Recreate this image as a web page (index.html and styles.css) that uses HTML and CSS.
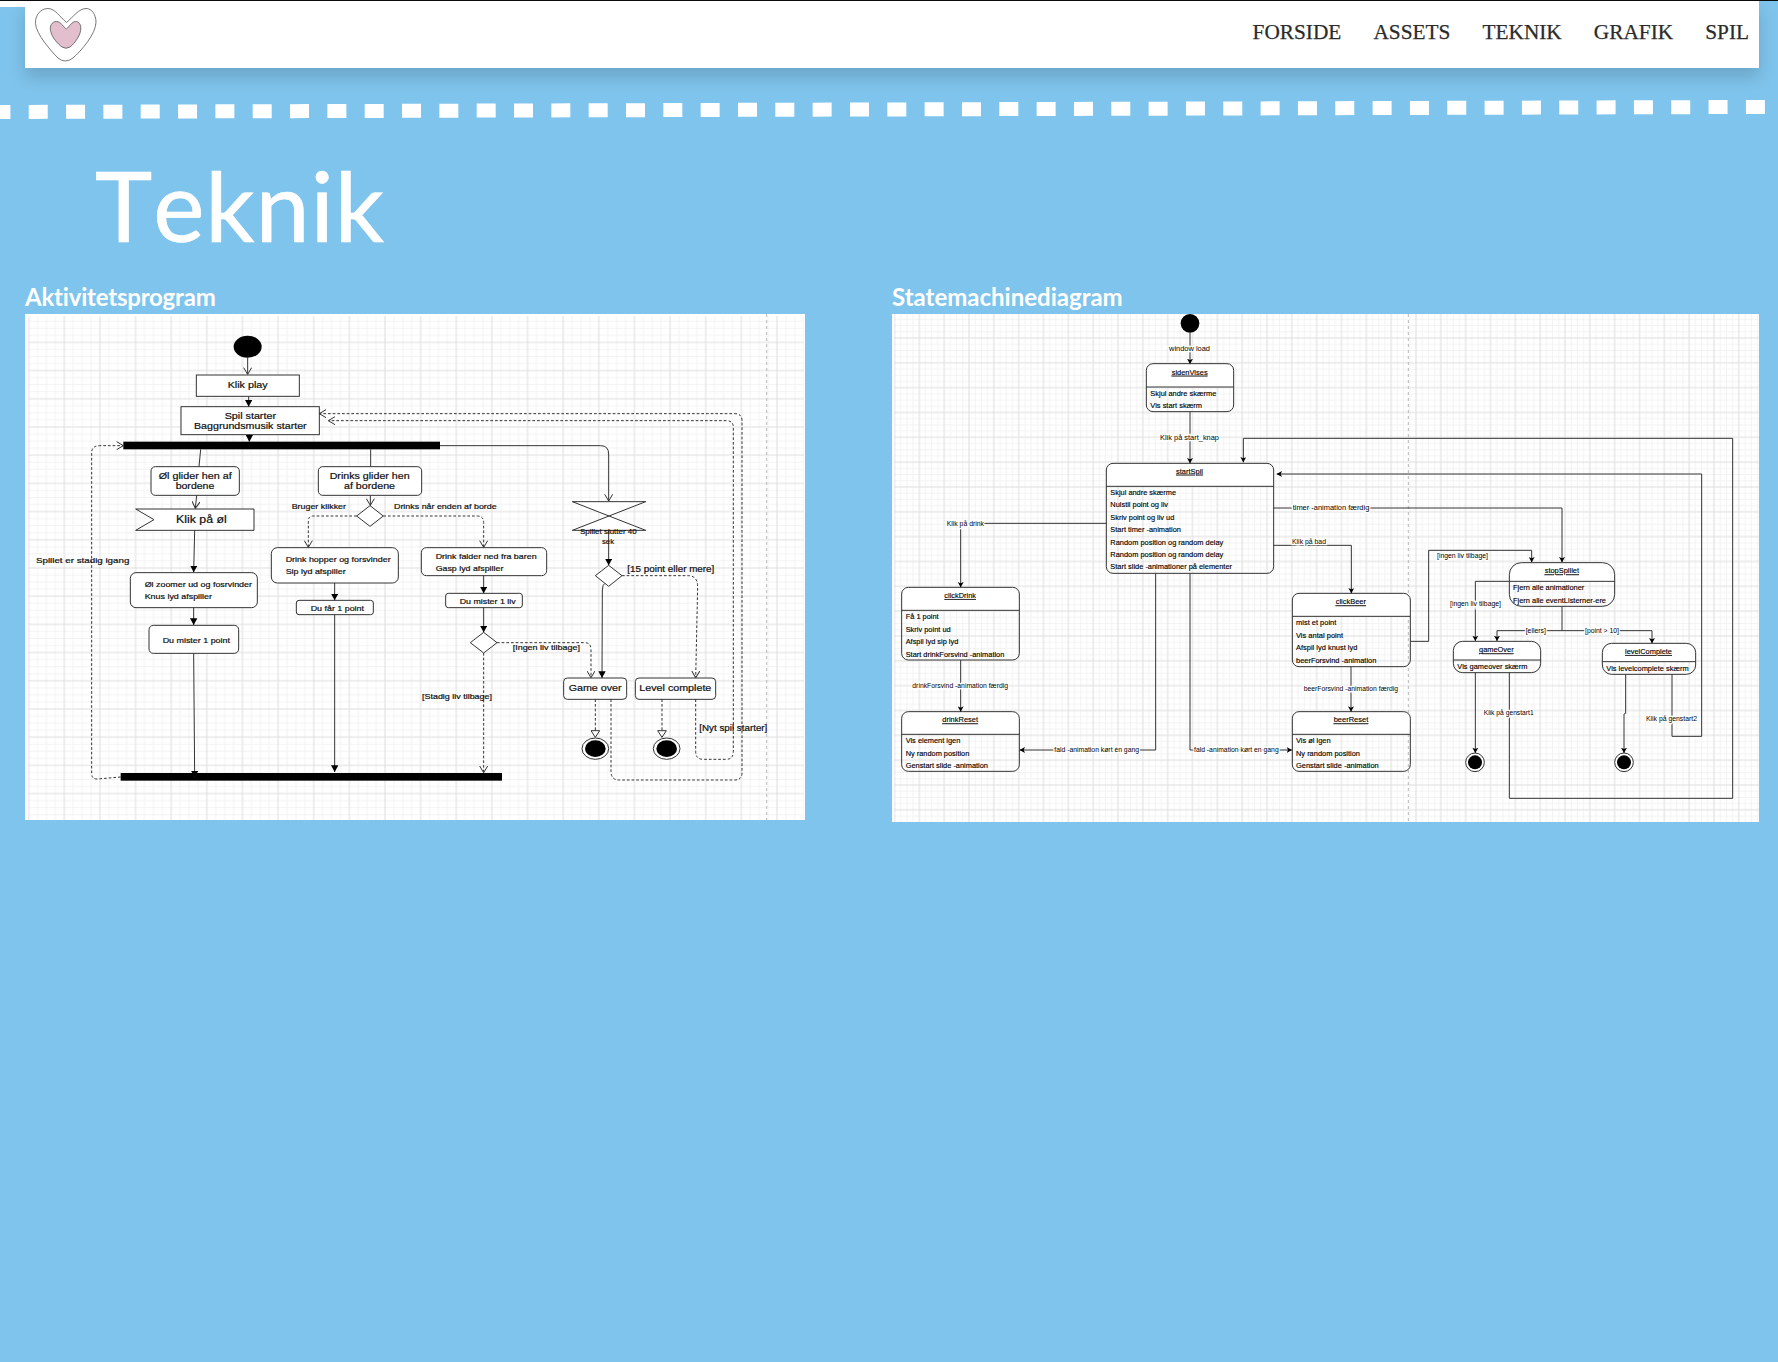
FILE: index.html
```html
<!DOCTYPE html>
<html lang="da">
<head>
<meta charset="utf-8">
<title>Teknik</title>
<link rel="stylesheet" href="styles.css">
</head>
<body>
<header class="topbar">
  <a class="logo" href="#"><svg viewBox="0 0 62 54" width="62" height="54"><path class="heart-outer" d="M31.5 14.500C25 9 20 .5 13 .5 5 .5 0 8 .5 15.500 1 26 16 43 23 50Q30 56 38 50C46 43 61 26 61 14 61 7 57 .5 51 .5 44 .5 38 9 31.500 14.500Z"/><path class="heart-inner" d="M31.500 21C28 19 26 13.500 21.500 13.500 17 13.500 14.500 18 15.500 22.500 17 30 23 36 27 39Q31 41.500 35 39C40 35 46 27 45.800 20 45.500 15 43 13.500 40.500 13.500 37 13.500 34 19 31.500 21Z"/></svg></a>
  <nav class="menu"><a href="#">FORSIDE</a><a href="#">ASSETS</a><a href="#">TEKNIK</a><a href="#">GRAFIK</a><a href="#">SPIL</a></nav>
</header>
<svg class="stitch" viewBox="0 0 1778 24" width="1778" height="24"><path d="M-8.600 14L1778 8.900" stroke-dasharray="19 18.330"/></svg>
<h1>Teknik</h1>
<main class="diagrams">
<section>
<h2 class="h-a">Aktivitetsprogram</h2>
<svg class="diagram activity" viewBox="15 12 2340 1518">
<defs>
  <pattern id="gridA" x="26" y="12.500" width="106.900" height="84.600" patternUnits="userSpaceOnUse"><path class="minor" d="M26.700 0V85M53.400 0V85M80.200 0V85M0 21.100H107M0 42.300H107M0 63.400H107"/><path class="major" d="M0 0V85M106.900 0V85M0 0H107M0 84.600H107"/></pattern>
  <marker id="solid" viewBox="0 0 24 18" refX="24" refY="9" markerWidth="20" markerHeight="22" markerUnits="userSpaceOnUse" orient="auto" preserveAspectRatio="none"><path d="M0 0L24 9L0 18Z"/></marker>
  <marker id="open" viewBox="0 0 24 26" refX="22" refY="13" markerWidth="24" markerHeight="26" markerUnits="userSpaceOnUse" orient="auto"><path class="tip" d="M2 1L22 13L2 25"/></marker>
  <marker id="hollow" viewBox="0 0 24 28" refX="2" refY="14" markerWidth="24" markerHeight="28" markerUnits="userSpaceOnUse" orient="auto"><path class="tip white" d="M2 1L22 14L2 27Z"/></marker>
</defs>
<rect class="paper" x="15" y="12" width="2340" height="1518"/>
<rect x="24" y="18" width="2328" height="1512" fill="url(#gridA)"/>
<path class="pagebreak" d="M2240 12V1530"/>
<g class="node">
  <rect x="529" y="195" width="309" height="64"/><rect x="483" y="290" width="415" height="84"/>
  <rect x="393" y="470" width="265" height="86" rx="13"/><path d="M347 597H702V661H347L402 629Z"/>
  <rect x="331" y="788" width="381" height="105" rx="17"/><rect x="387" y="946" width="269" height="84" rx="13"/>
  <rect x="895" y="470" width="310" height="86" rx="13"/><path d="M1010 618L1050 587L1090 618L1050 649Z"/>
  <rect x="754" y="713" width="381" height="106" rx="18"/><rect x="829" y="871" width="231" height="43" rx="8"/>
  <rect x="1204" y="713" width="376" height="84" rx="15"/><rect x="1277" y="850" width="230" height="43" rx="8"/>
  <path d="M1351 998L1391 967L1431 998L1391 1029Z"/><path d="M1657 575H1877L1657 661H1877Z"/>
  <path d="M1726 797L1766 766L1806 797L1766 829Z"/>
  <rect x="1631" y="1104" width="189" height="64" rx="11"/><rect x="1846" y="1104" width="241" height="64" rx="11"/>
  <ellipse cx="1726" cy="1316" rx="40" ry="32"/><ellipse cx="1940" cy="1316" rx="40" ry="32"/>
</g>
<g class="ink">
  <ellipse cx="683" cy="110" rx="42" ry="33"/><ellipse cx="1726" cy="1316" rx="31" ry="25"/><ellipse cx="1940" cy="1316" rx="31" ry="25"/>
  <rect x="310" y="395" width="950" height="23"/><rect x="302" y="1389" width="1144" height="23"/>
</g>
<g class="line">
  <path d="M683 143V193" marker-end="url(#open)"/><path d="M530 556L526 595" marker-end="url(#open)"/><path d="M1051 556V586" marker-end="url(#open)"/><path d="M1260 407H1742Q1766 407 1766 432V573" marker-end="url(#open)"/>
  <path d="M542 418L537 470M1052 418V470"/>
  <path d="M686 259V290" marker-end="url(#solid)"/><path d="M688 374V395" marker-end="url(#solid)"/><path d="M524 661L521 787" marker-end="url(#solid)"/><path d="M521 893V945" marker-end="url(#solid)"/><path d="M521 1030L524 1402" marker-end="url(#solid)"/>
  <path d="M944 819V871" marker-end="url(#solid)"/><path d="M944 914V1386" marker-end="url(#solid)"/><path d="M1391 797V850" marker-end="url(#solid)"/><path d="M1391 893V967" marker-end="url(#solid)"/><path d="M1766 661V766" marker-end="url(#solid)"/><path d="M1755 820Q1748 822 1747 840L1746 1104" marker-end="url(#solid)"/>
</g>
<g class="line dashed">
  <path d="M302 1401L232 1407Q215 1408 215 1390V425Q217 407 240 407H310" marker-end="url(#open)"/>
  <path d="M1010 618H880Q865 618 865 633V712" marker-end="url(#open)"/><path d="M1090 618H1372Q1391 618 1391 638V712" marker-end="url(#open)"/>
  <path d="M1431 998H1693Q1713 998 1713 1018V1103" marker-end="url(#open)"/><path d="M1391 1029V1388" marker-end="url(#open)"/>
  <path d="M1806 797H2005Q2033 798 2033 830L2027 1103" marker-end="url(#open)"/>
  <path d="M1726 1168V1262" marker-end="url(#hollow)"/><path d="M1926 1168V1262" marker-end="url(#hollow)"/>
  <path d="M1773 1168V1385Q1773 1410 1798 1410H2144Q2166 1410 2166 1388V332Q2166 311 2144 311H898" marker-end="url(#open)"/>
  <path d="M2027 1168V1325Q2027 1348 2050 1348H2118Q2140 1348 2140 1325V352Q2140 332 2118 332H925" marker-end="url(#open)"/>
</g>
<g class="t-mid">
  <text x="623" y="235" textLength="120" lengthAdjust="spacingAndGlyphs">Klik play</text>
  <text x="614" y="326" textLength="154" lengthAdjust="spacingAndGlyphs">Spil starter</text>
  <text x="522" y="356" textLength="338" lengthAdjust="spacingAndGlyphs">Baggrundsmusik starter</text>
  <text x="416" y="507" textLength="219" lengthAdjust="spacingAndGlyphs">Øl glider hen af</text>
  <text x="467" y="537" textLength="116" lengthAdjust="spacingAndGlyphs">bordene</text>
  <text x="929" y="507" textLength="240" lengthAdjust="spacingAndGlyphs">Drinks glider hen</text>
  <text x="972" y="537" textLength="153" lengthAdjust="spacingAndGlyphs">af bordene</text>
  <text x="1646" y="1142" textLength="159" lengthAdjust="spacingAndGlyphs">Game over</text>
  <text x="1858" y="1142" textLength="216" lengthAdjust="spacingAndGlyphs">Level complete</text>
</g>
<g class="t-note">
  <text x="1822" y="787" textLength="261" lengthAdjust="spacingAndGlyphs">[15 point eller mere]</text>
  <text x="2038" y="1264" textLength="204" lengthAdjust="spacingAndGlyphs">[Nyt spil starter]</text>
</g>
<g class="t-big"><text x="468" y="638" textLength="152" lengthAdjust="spacingAndGlyphs">Klik på øl</text></g>
<g class="t-small">
  <text x="815" y="596" textLength="163" lengthAdjust="spacingAndGlyphs">Bruger klikker</text>
  <text x="1122" y="597" textLength="308" lengthAdjust="spacingAndGlyphs">Drinks når enden af borde</text>
  <text x="48" y="758" textLength="280" lengthAdjust="spacingAndGlyphs">Spillet er stadig igang</text>
  <text x="797" y="757" textLength="315" lengthAdjust="spacingAndGlyphs">Drink hopper og forsvinder</text>
  <text x="797" y="793" textLength="180" lengthAdjust="spacingAndGlyphs">Sip lyd afspiller</text>
  <text x="374" y="832" textLength="322" lengthAdjust="spacingAndGlyphs">Øl zoomer ud og fosrvinder</text>
  <text x="374" y="868" textLength="202" lengthAdjust="spacingAndGlyphs">Knus lyd afspiller</text>
  <text x="872" y="903" textLength="160" lengthAdjust="spacingAndGlyphs">Du får 1 point</text>
  <text x="428" y="998" textLength="202" lengthAdjust="spacingAndGlyphs">Du mister 1 point</text>
  <text x="1680" y="671" textLength="170" lengthAdjust="spacingAndGlyphs">Spillet slutter 40</text>
  <text x="1746" y="702" textLength="36" lengthAdjust="spacingAndGlyphs">sek</text>
  <text x="1247" y="747" textLength="303" lengthAdjust="spacingAndGlyphs">Drink falder ned fra baren</text>
  <text x="1247" y="784" textLength="203" lengthAdjust="spacingAndGlyphs">Gasp lyd afspiller</text>
  <text x="1319" y="882" textLength="168" lengthAdjust="spacingAndGlyphs">Du mister 1 liv</text>
  <text x="1478" y="1019" textLength="202" lengthAdjust="spacingAndGlyphs">[Ingen liv tilbage]</text>
  <text x="1206" y="1167" textLength="210" lengthAdjust="spacingAndGlyphs">[Stadig liv tilbage]</text>
</g>
</svg>
</section>
<section>
<h2 class="h-s">Statemachinediagram</h2>
<svg class="diagram state" viewBox="21 132 2601 1524">
<defs>
  <pattern id="gridS" x="28.500" y="129.400" width="74.500" height="74.500" patternUnits="userSpaceOnUse"><path class="minor" d="M18.600 0V75M37.200 0V75M55.900 0V75M0 18.600H75M0 37.200H75M0 55.900H75"/><path class="major" d="M0 0V75M74.500 0V75M0 0H75M0 74.500H75"/></pattern>
  <marker id="arrow" viewBox="0 0 16 18" refX="16" refY="9" markerWidth="16" markerHeight="18" markerUnits="userSpaceOnUse" orient="auto"><path d="M0 0L16 9L0 18L4 9Z"/></marker>
</defs>
<rect class="paper" x="21" y="132" width="2601" height="1524"/>
<rect x="27" y="132" width="2595" height="1524" fill="url(#gridS)"/>
<path class="pagebreak" d="M1570 132V1656"/>
<g class="white">
  <path d="M784 351V301Q784 281 804 281H1026Q1046 281 1046 301V351ZM664 649V600Q664 580 684 580H1146Q1166 580 1166 600V649ZM50 1021V972Q50 952 70 952H383Q403 952 403 972V1021ZM50 1393V1345Q50 1325 70 1325H383Q403 1325 403 1345V1393ZM1222 1039V990Q1222 970 1242 970H1556Q1576 970 1576 990V1039ZM1222 1393V1345Q1222 1325 1242 1325H1556Q1576 1325 1576 1345V1393Z"/>
  <path d="M1873 934V914Q1877 882 1909 878H2153Q2185 882 2189 914V934ZM1705 1170V1142Q1709 1116 1733 1114H1939Q1963 1116 1967 1142V1170ZM2152 1175V1148Q2156 1122 2180 1120H2404Q2428 1122 2432 1148V1175Z"/>
  <circle cx="1770" cy="1477" r="28"/><circle cx="2217" cy="1477" r="28"/>
</g>
<g class="line">
  <rect x="784" y="281" width="262" height="144" rx="20"/><rect x="664" y="580" width="502" height="330" rx="20"/>
  <rect x="50" y="952" width="353" height="218" rx="20"/><rect x="50" y="1325" width="353" height="179" rx="20"/>
  <rect x="1222" y="970" width="354" height="220" rx="20"/><rect x="1222" y="1325" width="354" height="179" rx="20"/>
  <rect x="1873" y="878" width="316" height="131" rx="36"/><rect x="1705" y="1114" width="262" height="94" rx="28"/><rect x="2152" y="1120" width="280" height="93" rx="28"/>
  <circle cx="1770" cy="1477" r="28"/><circle cx="2217" cy="1477" r="28"/>
  <path d="M784 351H1046M664 649H1166M50 1021H403M50 1393H403M1222 1039H1576M1222 1393H1576M1873 934H2189M1705 1170H1967M2152 1175H2432M2031 1009V1082"/>
  <path d="M915 188V282" marker-end="url(#arrow)"/><path d="M915 425V580" marker-end="url(#arrow)"/>
  <path d="M664 760H227V952" marker-end="url(#arrow)"/><path d="M227 1170V1325" marker-end="url(#arrow)"/>
  <path d="M812 910V1440H404" marker-end="url(#arrow)"/><path d="M915 910V1440H1221" marker-end="url(#arrow)"/>
  <path d="M1398 1190V1325" marker-end="url(#arrow)"/><path d="M1166 714H2031V877" marker-end="url(#arrow)"/>
  <path d="M1166 826H1399V970" marker-end="url(#arrow)"/><path d="M1576 1114H1631V841H1940V877" marker-end="url(#arrow)"/>
  <path d="M1873 934H1771V1113" marker-end="url(#arrow)"/><path d="M2031 1082H1836V1113" marker-end="url(#arrow)"/><path d="M2031 1082H2301V1120" marker-end="url(#arrow)"/>
  <path d="M1771 1208V1449" marker-end="url(#arrow)"/><path d="M2222 1213V1330L2217 1332V1449" marker-end="url(#arrow)"/>
  <path d="M1873 1208V1585H2543V505H1075V577" marker-end="url(#arrow)"/><path d="M2361 1213V1399H2450V612H1175" marker-end="url(#arrow)"/>
</g>
<g class="ink"><circle cx="915" cy="160" r="28"/><circle cx="1770" cy="1477" r="21"/><circle cx="2217" cy="1477" r="21"/></g>
<g class="label">
  <text x="852" y="242" textLength="123" lengthAdjust="spacingAndGlyphs">window load</text>
  <text x="825" y="510" textLength="177" lengthAdjust="spacingAndGlyphs">Klik på start_knap</text>
  <text x="185" y="767" textLength="112" lengthAdjust="spacingAndGlyphs">Klik på drink</text>
  <text x="82" y="1254" textLength="287" lengthAdjust="spacingAndGlyphs">drinkForsvind -animation færdig</text>
  <text x="508" y="1446" textLength="254" lengthAdjust="spacingAndGlyphs">fald -animation kørt én gang</text>
  <text x="927" y="1446" textLength="254" lengthAdjust="spacingAndGlyphs">fald -animation kørt en gang</text>
  <text x="1256" y="1263" textLength="283" lengthAdjust="spacingAndGlyphs">beerForsvind -animation færdig</text>
  <text x="1223" y="720" textLength="230" lengthAdjust="spacingAndGlyphs">timer -animation færdig</text>
  <text x="1221" y="823" textLength="102" lengthAdjust="spacingAndGlyphs">Klik på bad</text>
  <text x="1656" y="863" textLength="153" lengthAdjust="spacingAndGlyphs">[ingen liv tilbage]</text>
  <text x="1695" y="1007" textLength="153" lengthAdjust="spacingAndGlyphs">[ingen liv tilbage]</text>
  <text x="1922" y="1088" textLength="61" lengthAdjust="spacingAndGlyphs">[ellers]</text>
  <text x="2100" y="1088" textLength="102" lengthAdjust="spacingAndGlyphs">[point &gt; 10]</text>
  <text x="1796" y="1336" textLength="150" lengthAdjust="spacingAndGlyphs">Klik på genstart1</text>
  <text x="2283" y="1353" textLength="153" lengthAdjust="spacingAndGlyphs">Klik på genstart2</text>
</g>
<g class="name">
  <text x="860" y="314" textLength="108" lengthAdjust="spacingAndGlyphs">sidenVises</text>
  <text x="873" y="611" textLength="81" lengthAdjust="spacingAndGlyphs">startSpil</text>
  <text x="178" y="984" textLength="95" lengthAdjust="spacingAndGlyphs">clickDrink</text>
  <text x="172" y="1357" textLength="107" lengthAdjust="spacingAndGlyphs">drinkReset</text>
  <text x="1352" y="1003" textLength="91" lengthAdjust="spacingAndGlyphs">clickBeer</text>
  <text x="1346" y="1357" textLength="104" lengthAdjust="spacingAndGlyphs">beerReset</text>
  <text x="1979" y="910" textLength="103" lengthAdjust="spacingAndGlyphs">stopSpillet</text>
  <text x="1782" y="1147" textLength="104" lengthAdjust="spacingAndGlyphs">gameOver</text>
  <text x="2220" y="1152" textLength="141" lengthAdjust="spacingAndGlyphs">levelComplete</text>
</g>
<g class="item">
  <text x="796" y="377" textLength="198" lengthAdjust="spacingAndGlyphs">Skjul andre skærme</text>
  <text x="796" y="414" textLength="155" lengthAdjust="spacingAndGlyphs">Vis start skærm</text>
  <text x="676" y="675" textLength="197" lengthAdjust="spacingAndGlyphs">Skjul andre skærme</text>
  <text x="676" y="712" textLength="173" lengthAdjust="spacingAndGlyphs">Nulstil point og liv</text>
  <text x="676" y="750" textLength="192" lengthAdjust="spacingAndGlyphs">Skriv point og liv ud</text>
  <text x="676" y="787" textLength="212" lengthAdjust="spacingAndGlyphs">Start timer -animation</text>
  <text x="676" y="824" textLength="339" lengthAdjust="spacingAndGlyphs">Random position og random delay</text>
  <text x="676" y="862" textLength="339" lengthAdjust="spacingAndGlyphs">Random position og random delay</text>
  <text x="676" y="898" textLength="365" lengthAdjust="spacingAndGlyphs">Start slide -animationer på elementer</text>
  <text x="62" y="1048" textLength="99" lengthAdjust="spacingAndGlyphs">Få 1 point</text>
  <text x="62" y="1085" textLength="135" lengthAdjust="spacingAndGlyphs">Skriv point ud</text>
  <text x="62" y="1122" textLength="158" lengthAdjust="spacingAndGlyphs">Afspil lyd sip lyd</text>
  <text x="62" y="1160" textLength="296" lengthAdjust="spacingAndGlyphs">Start drinkForsvind -animation</text>
  <text x="62" y="1420" textLength="164" lengthAdjust="spacingAndGlyphs">Vis element igen</text>
  <text x="62" y="1457" textLength="191" lengthAdjust="spacingAndGlyphs">Ny random position</text>
  <text x="62" y="1494" textLength="247" lengthAdjust="spacingAndGlyphs">Genstart slide -animation</text>
  <text x="1233" y="1066" textLength="121" lengthAdjust="spacingAndGlyphs">mist et point</text>
  <text x="1233" y="1103" textLength="141" lengthAdjust="spacingAndGlyphs">Vis antal point</text>
  <text x="1233" y="1140" textLength="184" lengthAdjust="spacingAndGlyphs">Afspil lyd knust lyd</text>
  <text x="1233" y="1178" textLength="241" lengthAdjust="spacingAndGlyphs">beerForsvind -animation</text>
  <text x="1233" y="1420" textLength="104" lengthAdjust="spacingAndGlyphs">Vis øl igen</text>
  <text x="1233" y="1457" textLength="192" lengthAdjust="spacingAndGlyphs">Ny random position</text>
  <text x="1233" y="1494" textLength="248" lengthAdjust="spacingAndGlyphs">Genstart slide -animation</text>
  <text x="1884" y="960" textLength="214" lengthAdjust="spacingAndGlyphs">Fjern alle animationer</text>
  <text x="1884" y="998" textLength="279" lengthAdjust="spacingAndGlyphs">Fjern alle eventListerner-ere</text>
  <text x="1717" y="1196" textLength="210" lengthAdjust="spacingAndGlyphs">Vis gameover skærm</text>
  <text x="2164" y="1202" textLength="247" lengthAdjust="spacingAndGlyphs">Vis levelcomplete skærm</text>
</g>
</svg>
</section>
</main>
</body>
</html>
```
FILE: styles.css
```css
* { box-sizing: border-box; }
body {
  margin: 0;
  min-height: 1362px;
  border-top: 1px solid #0b0b0d;
  background: linear-gradient(#fff, #fff) 0 0 / 25px 7px no-repeat, #7fc4ec;
  overflow: hidden;
}
.topbar {
  display: flex;
  justify-content: space-between;
  height: 67px;
  margin: 0 19px 0 25px;
  padding: 7px 10px 0 10px;
  background: #fff;
  box-shadow: 0 9px 16px rgba(0, 0, 0, .16);
}
.logo svg { display: block; }
.heart-outer { fill: #fff; stroke: #555; stroke-width: .8; }
.heart-inner { fill: #e3bfcd; stroke: #555; stroke-width: .8; }
.menu { display: flex; gap: 32.100px; padding-top: 11px; }
.menu a {
  font: 21.300px/26px "Liberation Serif", serif;
  color: #2b2b2b;
  text-decoration: none;
  -webkit-text-stroke: .25px #2b2b2b;
}
.stitch { display: block; margin-top: 30px; }
.stitch path { stroke: #fff; stroke-width: 14; fill: none; }
h1 {
  margin: 25px 0 0 95px;
  font: 400 97px/116px Lato, sans-serif;
  font-kerning: none;
  letter-spacing: .900px;
  color: #fff;
  -webkit-text-stroke: .7px #fff;
}
.diagrams {
  display: grid;
  grid-template-columns: 867px 867px;
  margin: 17px 0 0 25px;
}
h2 {
  height: 34px;
  margin: 0;
  font: 700 24px/34px Lato, sans-serif;
  font-variant-ligatures: none;
  color: #fff;
}
.h-a { letter-spacing: -.2px; }
.diagram { display: block; font-family: "Liberation Sans", Arial, sans-serif; }
.activity { width: 780px; height: 506px; }
.state { width: 867px; height: 508px; }
.paper { fill: #fff; }
.minor { stroke: #f1f1f1; stroke-width: 2.500; fill: none; }
.major { stroke: #dedede; stroke-width: 3; fill: none; }
.pagebreak { stroke: #b9b9b9; stroke-width: 3; stroke-dasharray: 9 9; fill: none; }
.node { fill: #fff; stroke: #333; stroke-width: 3; }
.line { fill: none; stroke: #333; stroke-width: 3; }
.dashed { stroke-dasharray: 8 6; }
.tip { fill: none; stroke: #333; stroke-width: 3; stroke-dasharray: none; }
.white { fill: #fff; }
.ink { fill: #000; }
.t-mid, .t-big, .t-note, .t-small { fill: #111; stroke: #111; stroke-width: .6px; }
.t-mid { font-size: 26.500px; }
.t-big { font-size: 30px; }
.t-note { font-size: 25px; }
.t-small { font-size: 22.500px; }
.label { font-size: 21.500px; stroke: #fff; stroke-width: 8px; paint-order: stroke; }
.name, .item { font-size: 22.500px; stroke: #000; stroke-width: .4px; }
.name { text-decoration: underline; }
```
